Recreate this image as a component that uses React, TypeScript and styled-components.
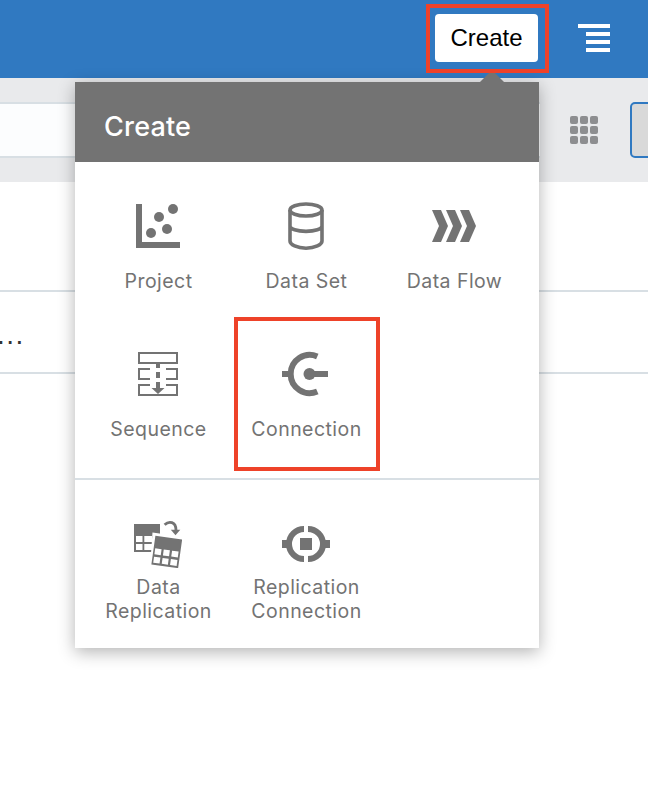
import React from "react";
import styled, { createGlobalStyle } from "styled-components";

const GlobalStyle = createGlobalStyle`
  * { box-sizing: border-box; }
  body { margin: 0; background: #fff; overflow: hidden; }
`;

const Page = styled.div`
  position: relative;
  width: 648px;
  height: 788px;
  overflow: hidden;
  background: #fff;
  font-family: Inter, "Liberation Sans", sans-serif;
`;

const TopBar = styled.header`
  display: flex;
  justify-content: flex-end;
  align-items: flex-start;
  height: 78px;
  padding: 4px 38px 0 0;
  background: #3079c1;
`;

const ButtonHighlight = styled.div`
  position: relative;
  z-index: 3;
  width: 123px;
  height: 69px;
  padding: 6px 5px;
  border: 4px solid #ee4229;
`;

const CreateButton = styled.button`
  display: block;
  width: 103px;
  height: 48px;
  padding: 0;
  border: 0;
  border-radius: 4px;
  background: #fff;
  color: #000;
  font: 24px/48px "Liberation Sans", Arial, sans-serif;
`;

const MenuIcon = styled.svg`
  width: 32px;
  height: 28px;
  margin: 20px 0 0 29px;
  fill: #fff;
`;

const Toolbar = styled.div`
  display: flex;
  align-items: center;
  height: 104px;
  background: #e9eaec;
`;

const SearchField = styled.div`
  flex: none;
  width: 540px;
  height: 56px;
  border: solid #d8dfe4;
  border-width: 2px 0;
  background: #fcfdfe;
`;

const GridIcon = styled.svg`
  flex: none;
  width: 28px;
  height: 28px;
  margin: 0 32px 0 30px;
  fill: #8d8e90;
`;

const SideButton = styled.div`
  flex: none;
  width: 56px;
  height: 56px;
  border: 2px solid #3079c1;
  border-radius: 5px;
  background: #d9d9d9;
`;

const ListRow = styled.div<{ $height: number }>`
  display: flex;
  align-items: center;
  height: ${(p) => p.$height}px;
  border-bottom: 2px solid #d8dfe4;
  color: #333;
  font-family: "Liberation Sans", Arial, sans-serif;
  font-size: 28px;
  line-height: 28px;
  letter-spacing: 1.5px;
`;

const Ellipsis = styled.span`
  margin: 5px 0 0 -3px;
`;

const Popup = styled.section`
  position: absolute;
  z-index: 2;
  left: 75px;
  top: 82px;
  width: 464px;
  height: 566px;
  background: #fff;
  box-shadow: 0 4px 16px rgba(0, 0, 0, 0.3);
`;

const Pointer = styled.div`
  position: absolute;
  left: 405px;
  top: -12px;
  border: 12px solid transparent;
  border-top-width: 0;
  border-bottom-color: #737373;
`;

const PopupHeader = styled.h2`
  height: 80px;
  margin: 0;
  padding: 5px 29px 0;
  background: #737373;
  color: #fff;
  font-size: 27px;
  font-weight: 450;
  line-height: 80px;
  letter-spacing: 0.2px;
`;

const ItemGrid = styled.div`
  display: grid;
  grid-template-columns: repeat(3, 148px);
  grid-auto-rows: 148px;
  padding: 8px 10px 10px 9px;
`;

const PrimaryGrid = styled(ItemGrid)`
  height: 318px;
  border-bottom: 2px solid #d8dfe4;
`;

const Item = styled.div`
  position: relative;
  display: flex;
  flex-direction: column;
  align-items: center;
  padding-top: 32px;
`;

const ItemIcon = styled.svg`
  flex: none;
  width: 48px;
  height: 48px;
  fill: #737373;
`;

const Label = styled.div<{ $tight?: boolean }>`
  margin-top: ${(p) => (p.$tight ? 7 : 19)}px;
  padding-left: 1px;
  color: #737373;
  text-align: center;
  font-size: 19.5px;
  line-height: 24px;
  letter-spacing: 0.45px;
  white-space: pre-line;
`;

const ItemHighlight = styled.div`
  position: absolute;
  left: 2px;
  top: -1px;
  width: 146px;
  height: 154px;
  border: 4px solid #ee4229;
`;

const icons = {
  project: (
    <>
      <path d="M2 2h6v38h38v6H2z" />
      <circle cx="17" cy="31" r="5" />
      <circle cx="25" cy="15" r="5" />
      <circle cx="33" cy="27" r="5" />
      <circle cx="39" cy="7" r="5" />
    </>
  ),
  dataSet: (
    <g fill="none" stroke="#737373" strokeWidth="3.6">
      <ellipse cx="24" cy="8" rx="16" ry="6" />
      <path d="M8 8v31c0 3.6 7 7.2 16 7.2s16-3.6 16-7.2V8M8 24c0 3 7 5.4 16 5.4S40 27 40 24" />
    </g>
  ),
  dataFlow: (
    <path d="M2 8h9l7 16-7 16H2l7-16zM16 8h9l7 16-7 16h-9l7-16zM30 8h9l7 16-7 16h-9l7-16z" />
  ),
  sequence: (
    <>
      <path
        d="M5 3h38v10H5zM16 19H5v10h11M32 19h11v10H32M16 35H5v10h38V35H32"
        fill="none"
        stroke="#737373"
        strokeWidth="2"
      />
      <path d="M22 13h4v5h-4zM22 22h4v6h-4zM22 32h4v6h4.5L24 44l-6.5-6H22z" />
    </>
  ),
  connection: (
    <>
      <path d="M35.3 6.6A19 19 0 1 0 35.3 41.4" fill="none" stroke="#737373" strokeWidth="6" />
      <path d="M0 21h8v6H0zM28 21h18v6H28z" />
      <circle cx="27.5" cy="24" r="6" />
    </>
  ),
  replication: (
    <>
      <path
        d="M0 4h26v28H0zM2 16v6h6.5v-6zM10.3 16v6H18v-6zM2 24v6h6.5v-6zM10.3 24v6H18v-6z"
        fillRule="evenodd"
      />
      <path d="M18.5 12.5 50 17v33H15.8z" fill="#fff" />
      <g transform="translate(21.4 15.7) rotate(8)">
        <path
          d="M0 0h27v29H0zM1.6 12.5v6h6.4v-6zM10.2 12.5v6h6.2v-6zM18.6 12.5v6h6.6v-6zM1.6 21v6h6.4v-6zM10.2 21v6h6.2v-6zM18.6 21v6h6.6v-6z"
          fillRule="evenodd"
        />
      </g>
      <path d="M30.6 4.8C35 .6 42 1.5 42 10.2" fill="none" stroke="#737373" strokeWidth="2.8" />
      <path d="M36.8 9.8h9.5L41.5 15.3z" />
    </>
  ),
  replicationConnection: (
    <>
      <path d="M22 9A15 15 0 0 0 22 39M26 9A15 15 0 0 1 26 39" fill="none" stroke="#737373" strokeWidth="6" />
      <path d="M0 20h6v8H0zM42 20h6v8h-6zM18 18h12v12H18z" />
    </>
  ),
};

type IconName = keyof typeof icons;

const primary: { label: string; icon: IconName; selected?: boolean }[] = [
  { label: "Project", icon: "project" },
  { label: "Data Set", icon: "dataSet" },
  { label: "Data Flow", icon: "dataFlow" },
  { label: "Sequence", icon: "sequence" },
  { label: "Connection", icon: "connection", selected: true },
];

const secondary: { label: string; icon: IconName }[] = [
  { label: "Data\nReplication", icon: "replication" },
  { label: "Replication\nConnection", icon: "replicationConnection" },
];

const cells = [0, 10, 20];

export default function App() {
  return (
    <Page>
      <GlobalStyle />
      <TopBar>
        <ButtonHighlight>
          <CreateButton>Create</CreateButton>
        </ButtonHighlight>
        <MenuIcon viewBox="0 0 32 28">
          <path d="M0 0h32v4H0zM8 8h24v4H8zM8 16h24v4H8zM8 24h24v4H8z" />
        </MenuIcon>
      </TopBar>
      <Toolbar>
        <SearchField />
        <GridIcon viewBox="0 0 28 28">
          {cells.map((y) => cells.map((x) => <rect key={`${x}-${y}`} x={x} y={y} width="8" height="8" rx="2" />))}
        </GridIcon>
        <SideButton />
      </Toolbar>
      <ListRow $height={110} />
      <ListRow $height={82}>
        <Ellipsis>...</Ellipsis>
      </ListRow>
      <Popup>
        <Pointer />
        <PopupHeader>Create</PopupHeader>
        <PrimaryGrid>
          {primary.map((item) => (
            <Item key={item.label}>
              <ItemIcon viewBox="0 0 48 48">{icons[item.icon]}</ItemIcon>
              <Label>{item.label}</Label>
              {item.selected && <ItemHighlight />}
            </Item>
          ))}
        </PrimaryGrid>
        <ItemGrid>
          {secondary.map((item) => (
            <Item key={item.label}>
              <ItemIcon viewBox="0 0 48 48">{icons[item.icon]}</ItemIcon>
              <Label $tight>{item.label}</Label>
            </Item>
          ))}
        </ItemGrid>
      </Popup>
    </Page>
  );
}
